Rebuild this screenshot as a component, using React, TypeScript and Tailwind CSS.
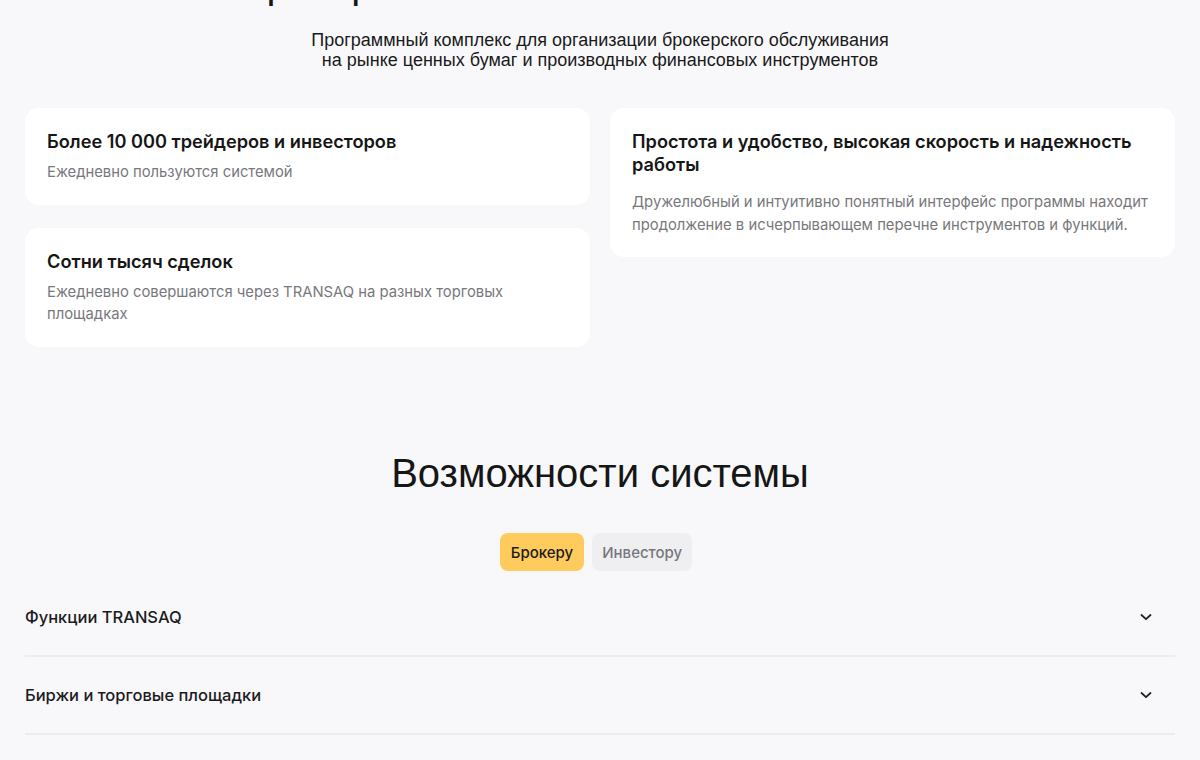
import React from "react";

const sans = { fontFamily: "Inter, 'Noto Sans', sans-serif" };
const arial = { fontFamily: "'Liberation Sans', Arial, sans-serif" };

function Card({ title, text, gap = "mt-[8px]" }: { title: string; text: string; gap?: string }) {
  return (
    <div className="rounded-[14px] bg-white pl-[22px] pr-[18px] pt-[22px] pb-[21px]">
      <h3 className="text-[18.2px] font-semibold leading-[23px] text-[#161616]">{title}</h3>
      <p className={`${gap} text-[14.8px] leading-[22.5px] text-[#78787c]`}>{text}</p>
    </div>
  );
}

function Chevron() {
  return (
    <svg width="14" height="14" viewBox="0 0 14 14" fill="none">
      <path d="M2.5 5 L7 9.2 L11.5 5" stroke="#222" strokeWidth="1.8" strokeLinecap="round" strokeLinejoin="round" />
    </svg>
  );
}

function Row({ label }: { label: string }) {
  return (
    <div className="flex items-center justify-between border-b-2 border-[#ececef] py-[26px] pr-[22px]">
      <span className="text-[16.5px] font-medium leading-[24px] text-[#1c1c1e]">{label}</span>
      <Chevron />
    </div>
  );
}

export default function App() {
  return (
    <div className="min-h-[760px] w-[1200px] overflow-hidden bg-[#f8f8fa]" style={sans}>
      <section className="px-[25px]">
        <h1
          className="-mt-[40px] h-[48px] text-center text-[40px] leading-[48px] text-[#161616]"
          style={arial}
        >
          Брокерская система нового поколения
        </h1>
        <p className="mt-[22px] text-center text-[18px] leading-[20px] text-[#1a1a1a]" style={arial}>
          Программный комплекс для организации брокерского обслуживания
          <br />
          на рынке ценных бумаг и производных финансовых инструментов
        </p>

        <div className="mt-[38px] grid grid-cols-2 gap-x-[20px]">
          <div className="flex flex-col gap-[23px]">
            <Card title="Более 10 000 трейдеров и инвесторов" text="Ежедневно пользуются системой" />
            <Card
              title="Сотни тысяч сделок"
              text="Ежедневно совершаются через TRANSAQ на разных торговых площадках"
            />
          </div>
          <div className="self-start">
            <Card
              gap="mt-[15px]"
              title="Простота и удобство, высокая скорость и надежность работы"
              text="Дружелюбный и интуитивно понятный интерфейс программы находит продолжение в исчерпывающем перечне инструментов и функций."
            />
          </div>
        </div>
      </section>

      <section className="mt-[102px] px-[25px]">
        <h2 className="text-center text-[40px] leading-[48px] text-[#161616]" style={arial}>
          Возможности системы
        </h2>
        <div className="mt-[36px] flex justify-center gap-[8px] pr-[8px]">
          <button className="h-[38px] rounded-[8px] bg-[#ffcb5c] px-[11px] pt-[3px] text-[15px] font-medium text-[#1c1c1c]">
            Брокеру
          </button>
          <button className="h-[38px] rounded-[8px] bg-[#efeff2] px-[10px] pt-[3px] text-[15px] font-medium text-[#77777c]">
            Инвестору
          </button>
        </div>
        <div className="mt-[8px]">
          <Row label="Функции TRANSAQ" />
          <Row label="Биржи и торговые площадки" />
        </div>
      </section>
    </div>
  );
}
